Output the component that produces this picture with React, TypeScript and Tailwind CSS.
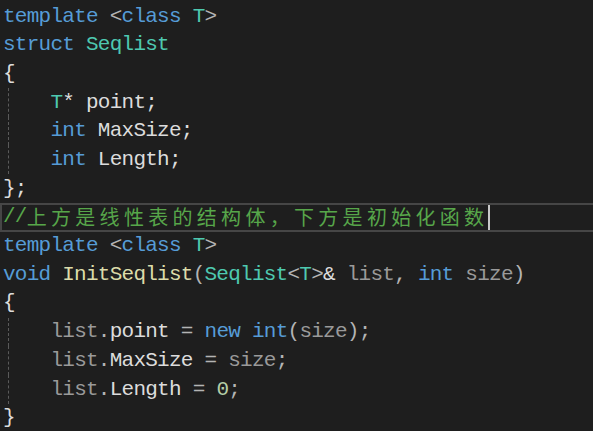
import React from "react";

const C = {
  kw: "text-[#569cd6]",
  type: "text-[#4ec9b0]",
  txt: "text-[#dcdcdc]",
  cm: "text-[#57a64a]",
  fn: "text-[#dcdcaa]",
  prm: "text-[#9a9a9a]",
  pn: "text-[#b4b4b4]",
  num: "text-[#b5cea8]",
};

type Tok = [string, string];

const Line = ({ toks, guide }: { toks: Tok[]; guide?: boolean }) => (
  <div className="flex h-[28.7px] items-center whitespace-pre pl-[3px]">
    {guide && (
      <span className="ml-[5px] mr-[-8px] h-full w-[3px] border-l border-dashed border-[#5a5a5a]" />
    )}
    {toks.map(([cls, t], i) => (
      <span key={i} className={cls}>
        {t}
      </span>
    ))}
  </div>
);

const App = () => {
  return (
    <div
      className="h-[431px] w-[593px] overflow-hidden bg-[#1e1e1e] pt-[2px] text-[21px] tracking-[-0.75px]"
      style={{ fontFamily: '"Liberation Mono", "Noto Sans CJK SC", monospace' }}
    >
      <Line toks={[[C.kw, "template "], [C.pn, "<"], [C.kw, "class "], [C.type, "T"], [C.pn, ">"]]} />
      <Line toks={[[C.kw, "struct "], [C.type, "Seqlist"]]} />
      <Line toks={[[C.txt, "{"]]} />
      <Line guide toks={[[C.txt, "    "], [C.type, "T"], [C.txt, "* point;"]]} />
      <Line guide toks={[[C.txt, "    "], [C.kw, "int "], [C.txt, "MaxSize;"]]} />
      <Line guide toks={[[C.txt, "    "], [C.kw, "int "], [C.txt, "Length;"]]} />
      <Line toks={[[C.txt, "};"]]} />
      <div className="flex h-[28.7px] items-center whitespace-pre border-y-2 border-l-2 border-[#464646] pl-[1px]">
        <span className={C.cm}>//</span>
        <span
          className={`${C.cm} text-[20px] tracking-[4.3px]`}
          style={{ fontFamily: '"Noto Sans CJK SC", sans-serif' }}
        >
          上方是线性表的结构体，下方是初始化函数
        </span>
        <span className="h-full w-[2px] bg-[#c8c8c8]" />
      </div>
      <Line toks={[[C.kw, "template "], [C.pn, "<"], [C.kw, "class "], [C.type, "T"], [C.pn, ">"]]} />
      <Line
        toks={[
          [C.kw, "void "],
          [C.fn, "InitSeqlist"],
          [C.pn, "("],
          [C.type, "Seqlist"],
          [C.pn, "<"],
          [C.type, "T"],
          [C.pn, ">"],
          [C.txt, "& "],
          [C.prm, "list"],
          [C.pn, ", "],
          [C.kw, "int "],
          [C.prm, "size"],
          [C.pn, ")"],
        ]}
      />
      <Line toks={[[C.txt, "{"]]} />
      <Line
        guide
        toks={[
          [C.txt, "    "],
          [C.prm, "list"],
          [C.pn, "."],
          [C.txt, "point "],
          [C.pn, "= "],
          [C.kw, "new int"],
          [C.pn, "("],
          [C.prm, "size"],
          [C.pn, ");"],
        ]}
      />
      <Line
        guide
        toks={[
          [C.txt, "    "],
          [C.prm, "list"],
          [C.pn, "."],
          [C.txt, "MaxSize "],
          [C.pn, "= "],
          [C.prm, "size"],
          [C.pn, ";"],
        ]}
      />
      <Line
        guide
        toks={[
          [C.txt, "    "],
          [C.prm, "list"],
          [C.pn, "."],
          [C.txt, "Length "],
          [C.pn, "= "],
          [C.num, "0"],
          [C.pn, ";"],
        ]}
      />
      <Line toks={[[C.txt, "}"]]} />
    </div>
  );
};

export default App;
